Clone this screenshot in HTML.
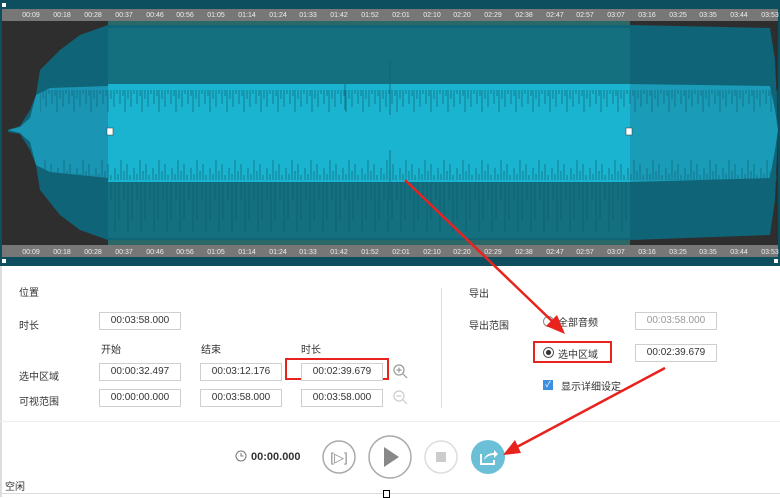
<!DOCTYPE html>
<html><head><meta charset="utf-8"><style>
body{margin:0;width:780px;height:497px;overflow:hidden;background:#fff;font-family:"Liberation Sans","Noto Sans CJK SC",sans-serif;position:relative}
.a{position:absolute}
.lbl{font-size:10px;color:#333}
.box{position:absolute;height:16px;border:1px solid #cfcfcf;font-size:10px;color:#333;text-align:center;line-height:16px;background:#fff}
</style></head><body>
<svg class="a" style="left:0;top:0" width="780" height="266">
<defs>
<pattern id="sp" width="17" height="30" patternUnits="userSpaceOnUse">
<g stroke="#0f6478" stroke-width="1">
<line x1="1" y1="0" x2="1" y2="14"/><line x1="4" y1="0" x2="4" y2="6"/><line x1="6" y1="0" x2="6" y2="22"/><line x1="9" y1="0" x2="9" y2="9"/><line x1="12" y1="0" x2="12" y2="17"/><line x1="15" y1="0" x2="15" y2="4"/>
</g></pattern>
<pattern id="sp2" width="19" height="30" patternUnits="userSpaceOnUse">
<g stroke="#0f6478" stroke-width="1">
<line x1="1" y1="30" x2="1" y2="18"/><line x1="4" y1="30" x2="4" y2="24"/><line x1="7" y1="30" x2="7" y2="10"/><line x1="10" y1="30" x2="10" y2="21"/><line x1="13" y1="30" x2="13" y2="14"/><line x1="16" y1="30" x2="16" y2="25"/>
</g></pattern>
<pattern id="sp3" width="13" height="60" patternUnits="userSpaceOnUse">
<g stroke="#0a5566" stroke-width="1">
<line x1="2" y1="0" x2="2" y2="40"/><line x1="7" y1="0" x2="7" y2="20"/><line x1="11" y1="0" x2="11" y2="52"/>
</g></pattern>
</defs>
<rect width="780" height="266" fill="#0e4f5f"/>
<rect x="2" y="9" width="776" height="12" fill="#777"/>
<rect x="2" y="245" width="776" height="12" fill="#777"/>
<rect x="2" y="21" width="106" height="224" fill="#2e2e2e"/>
<rect x="108" y="21" width="522" height="224" fill="#2b6868"/>
<rect x="630" y="21" width="148" height="224" fill="#2e2e2e"/>
<polygon points="8,130 20,126 30,110 36,95 40,70 60,50 80,35 108,25 630,25 770,28 775,60 778,130 775,200 770,235 630,240 108,240 80,230 60,215 40,190 36,165 30,150 20,134 8,132" fill="#0f6478"/>
<polygon points="108,28 630,28 630,238 108,238" fill="#14707f"/>
<rect x="108" y="182" width="522" height="56" fill="url(#sp3)" opacity=".6"/>
<polygon points="8,130 20,127 30,118 36,95 50,88 108,86 108,178 50,172 36,165 30,142 20,133" fill="#1a96b4"/>
<rect x="108" y="84" width="522" height="98" fill="#1ab4d0"/>
<polygon points="630,84 770,86 775,110 778,130 775,150 770,178 630,182" fill="#1a9cb8"/>
<rect x="40" y="84" width="738" height="30" fill="url(#sp)" opacity=".7"/>
<rect x="40" y="152" width="738" height="30" fill="url(#sp2)" opacity=".7"/>
<g stroke="#0f6478" stroke-width="1" opacity=".8">
<line x1="345" y1="84" x2="345" y2="110"/><line x1="390" y1="60" x2="390" y2="115"/><line x1="390" y1="150" x2="390" y2="200"/>
</g>
<rect x="107" y="128" width="6" height="7" fill="#fff" stroke="#333" stroke-width=".5"/>
<rect x="626" y="128" width="6" height="7" fill="#fff" stroke="#333" stroke-width=".5"/>
<rect x="2" y="3" width="4" height="4" fill="#fff"/>
<rect x="2" y="259" width="4" height="4" fill="#fff"/>
<rect x="774" y="259" width="4" height="4" fill="#fff"/>
<g font-size="7" fill="#eee" font-family="Liberation Sans" text-anchor="middle">
<text x="31" y="17">00:09</text><text x="62" y="17">00:18</text><text x="93" y="17">00:28</text><text x="124" y="17">00:37</text><text x="155" y="17">00:46</text><text x="185" y="17">00:56</text><text x="216" y="17">01:05</text><text x="247" y="17">01:14</text><text x="278" y="17">01:24</text><text x="308" y="17">01:33</text><text x="339" y="17">01:42</text><text x="370" y="17">01:52</text><text x="401" y="17">02:01</text><text x="432" y="17">02:10</text><text x="462" y="17">02:20</text><text x="493" y="17">02:29</text><text x="524" y="17">02:38</text><text x="555" y="17">02:47</text><text x="585" y="17">02:57</text><text x="616" y="17">03:07</text><text x="647" y="17">03:16</text><text x="678" y="17">03:25</text><text x="708" y="17">03:35</text><text x="739" y="17">03:44</text><text x="770" y="17">03:53</text>
<text x="31" y="254">00:09</text><text x="62" y="254">00:18</text><text x="93" y="254">00:28</text><text x="124" y="254">00:37</text><text x="155" y="254">00:46</text><text x="185" y="254">00:56</text><text x="216" y="254">01:05</text><text x="247" y="254">01:14</text><text x="278" y="254">01:24</text><text x="308" y="254">01:33</text><text x="339" y="254">01:42</text><text x="370" y="254">01:52</text><text x="401" y="254">02:01</text><text x="432" y="254">02:10</text><text x="462" y="254">02:20</text><text x="493" y="254">02:29</text><text x="524" y="254">02:38</text><text x="555" y="254">02:47</text><text x="585" y="254">02:57</text><text x="616" y="254">03:07</text><text x="647" y="254">03:16</text><text x="678" y="254">03:25</text><text x="708" y="254">03:35</text><text x="739" y="254">03:44</text><text x="770" y="254">03:53</text>
</g>
</svg>
<div class="a" style="left:0;top:266px;width:2px;height:231px;background:#ddd"></div>
<div class="a lbl" style="left:19px;top:284px">位置</div>
<div class="a lbl" style="left:19px;top:317px">时长</div>
<div class="box" style="left:99px;top:312px;width:80px">00:03:58.000</div>
<div class="a lbl" style="left:101px;top:341px">开始</div>
<div class="a lbl" style="left:201px;top:341px">结束</div>
<div class="a lbl" style="left:301px;top:341px">时长</div>
<div class="a lbl" style="left:19px;top:368px">选中区域</div>
<div class="box" style="left:99px;top:363px;width:80px">00:00:32.497</div>
<div class="box" style="left:200px;top:363px;width:80px">00:03:12.176</div>
<div class="a" style="left:285px;top:358px;width:104px;height:22px;border:2px solid #e8231d;box-sizing:border-box"></div>
<div class="box" style="left:301px;top:363px;width:80px">00:02:39.679</div>
<div class="a lbl" style="left:19px;top:393px">可视范围</div>
<div class="box" style="left:99px;top:389px;width:80px">00:00:00.000</div>
<div class="box" style="left:200px;top:389px;width:80px">00:03:58.000</div>
<div class="box" style="left:301px;top:389px;width:80px">00:03:58.000</div>
<svg class="a" style="left:392px;top:362px" width="18" height="44"><g fill="none" stroke="#999" stroke-width="1.2"><circle cx="7" cy="8" r="5"/><path d="M11 12l4 4M4.5 8h5M7 5.5v5"/><circle cx="7" cy="34" r="5" stroke="#ccc"/><path d="M11 38l4 4M4.5 34h5" stroke="#ccc"/></g></svg>
<div class="a" style="left:441px;top:288px;width:1px;height:120px;background:#ddd"></div>
<div class="a lbl" style="left:469px;top:285px">导出</div>
<div class="a lbl" style="left:469px;top:317px">导出范围</div>
<div class="a" style="left:543px;top:316px;width:9px;height:9px;border:1px solid #888;border-radius:50%"></div>
<div class="a lbl" style="left:558px;top:314px">全部音频</div>
<div class="box" style="left:635px;top:312px;width:80px;color:#999">00:03:58.000</div>
<div class="a" style="left:533px;top:341px;width:79px;height:22px;border:2px solid #e8231d;box-sizing:border-box"></div>
<div class="a" style="left:543px;top:347px;width:9px;height:9px;border:1px solid #555;border-radius:50%;background:radial-gradient(#333 35%,#fff 45%)"></div>
<div class="a lbl" style="left:558px;top:346px">选中区域</div>
<div class="box" style="left:635px;top:344px;width:80px">00:02:39.679</div>
<div class="a" style="left:543px;top:380px;width:10px;height:10px;background:#3d8fe0;color:#fff;font-size:8px;line-height:10px;text-align:center">✓</div>
<div class="a lbl" style="left:561px;top:378px">显示详细设定</div>
<div class="a" style="left:0;top:421px;width:780px;height:1px;background:#eee"></div>
<svg class="a" style="left:235px;top:450px" width="12" height="12"><circle cx="6" cy="6" r="5" fill="none" stroke="#777"/><path d="M6 3v3h2.5" fill="none" stroke="#777"/></svg>
<div class="a" style="left:251px;top:451px;font-size:11px;color:#333;font-weight:bold">00:00.000</div>
<svg class="a" style="left:320px;top:435px" width="200" height="45">
<circle cx="19" cy="22" r="16" fill="none" stroke="#aaa" stroke-width="1.5"/>
<text x="19" y="27" font-size="13" fill="#888" text-anchor="middle" font-family="Liberation Sans">[▷]</text>
<circle cx="70" cy="22" r="21" fill="none" stroke="#aaa" stroke-width="1.5"/>
<path d="M64 12v20l15-10z" fill="#888"/>
<circle cx="121" cy="22" r="16" fill="none" stroke="#ddd" stroke-width="1.5"/>
<rect x="116" y="17" width="10" height="10" fill="#ccc"/>
<circle cx="168" cy="22" r="17" fill="#6bbfd6"/>
<path d="M161 19v10h13v-4" fill="none" stroke="#fff" stroke-width="2"/>
<path d="M164 25c1-5 5-7 10-7v-3l4 4-4 4v-3c-4 0-7 1-10 5z" fill="#fff"/>
</svg>
<div class="a lbl" style="left:5px;top:478px">空闲</div>
<div class="a" style="left:0;top:493px;width:780px;height:1px;background:#ddd"></div>
<div class="a" style="left:383px;top:490px;width:5px;height:6px;border:1px solid #000;background:#fff"></div>
<svg class="a" style="left:0;top:0" width="780" height="497">
<g stroke="#e8231d" stroke-width="2.5" fill="#e8231d">
<line x1="405" y1="180" x2="553" y2="322"/>
<polygon points="565,334 546,326 557,315" stroke="none"/>
<line x1="665" y1="368" x2="515" y2="448"/>
<polygon points="503,455 515,440 521,453" stroke="none"/>
</g></svg>
</body></html>
